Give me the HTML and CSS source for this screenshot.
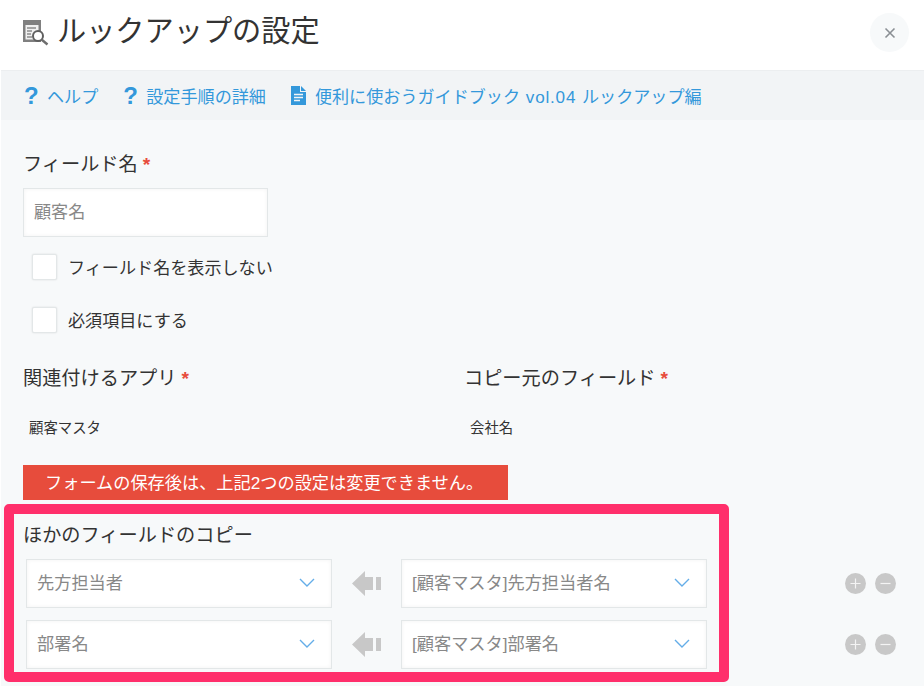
FILE: index.html
```html
<!DOCTYPE html>
<html lang="ja">
<head>
<meta charset="utf-8">
<title>ルックアップの設定</title>
<link rel="stylesheet" href="styles.css">
</head>
<body>
<div class="dialog">
  <header class="head">
    <svg class="head-icon" width="26" height="26" viewBox="0 0 26 26">
      <path d="M0 0h18v22H0z" fill="#808080"/>
      <rect x="2.500" y="5" width="13" height="14.500" fill="#f1f1f1"/>
      <path d="M4 8h9M4 11h5M4 14h4M4 17h5" stroke="#8c8c8c" stroke-width="1.300"/>
      <circle cx="15" cy="16" r="5" fill="#fff" stroke="#5f5f5f" stroke-width="2"/>
      <path d="M18.500 19.500l6 5" stroke="#6e6e6e" stroke-width="2.400"/>
    </svg>
    <h1 class="title">ルックアップの設定</h1>
    <button class="close" type="button"><svg width="12" height="12" viewBox="0 0 12 12"><path d="M1.500 1.500l9 9M10.500 1.500l-9 9" stroke="#8a8f94" stroke-width="1.600"/></svg></button>
  </header>
  <nav class="links">
    <a class="link"><span class="q">?</span><span class="link-text">ヘルプ</span></a>
    <a class="link"><span class="q">?</span><span class="link-text">設定手順の詳細</span></a>
    <a class="link link-doc"><svg class="doc" width="15" height="19" viewBox="0 0 15 19"><path d="M0 0h9v6h6v13H0z" fill="#3498db"/><path d="M10 0l5 5h-5z" fill="#3498db"/><path d="M3 8.500h9M3 11.500h9M3 14.500h6" stroke="#f2f4f6" stroke-width="1.300"/></svg><span class="link-text">便利に使おうガイドブック <span class="ver">vol.04</span> ルックアップ編</span></a>
  </nav>
  <main class="form">
    <div class="label label-first">フィールド名<span class="req">*</span></div>
    <div class="input"><span class="ph">顧客名</span></div>
    <label class="check check-first"><span class="box"></span><span class="check-text">フィールド名を表示しない</span></label>
    <label class="check"><span class="box"></span><span class="check-text">必須項目にする</span></label>
    <div class="pair">
      <div class="col">
        <div class="label">関連付けるアプリ<span class="req">*</span></div>
        <div class="value">顧客マスタ</div>
      </div>
      <div class="col">
        <div class="label">コピー元のフィールド<span class="req">*</span></div>
        <div class="value">会社名</div>
      </div>
    </div>
    <div class="alert">フォームの保存後は、上記2つの設定は変更できません。</div>
    <div class="label copy-label">ほかのフィールドのコピー</div>
    <div class="map">
      <div class="select"><span class="select-text">先方担当者</span><svg class="chev" width="16" height="9" viewBox="0 0 16 9"><path d="M1 1l7 7 7-7" fill="none" stroke="#64ade8" stroke-width="1.400"/></svg></div>
      <svg class="arrow" width="30" height="25" viewBox="0 0 30 25"><path d="M0 12.500L13 0v6h8v13h-8v6z" fill="#c8c8c8"/><rect x="24" y="6" width="5" height="13" fill="#c8c8c8"/></svg>
      <div class="select"><span class="select-text">[顧客マスタ]先方担当者名</span><svg class="chev" width="16" height="9" viewBox="0 0 16 9"><path d="M1 1l7 7 7-7" fill="none" stroke="#64ade8" stroke-width="1.400"/></svg></div>
      <div class="btns"><span class="round"><svg width="21" height="21" viewBox="0 0 21 21"><path d="M5.500 10.500h10M10.500 5.500v10" stroke="#f4f4f4" stroke-width="1.200"/></svg></span><span class="round"><svg width="21" height="21" viewBox="0 0 21 21"><path d="M5.500 10.500h10" stroke="#f4f4f4" stroke-width="1.200"/></svg></span></div>
      <div class="select"><span class="select-text">部署名</span><svg class="chev" width="16" height="9" viewBox="0 0 16 9"><path d="M1 1l7 7 7-7" fill="none" stroke="#64ade8" stroke-width="1.400"/></svg></div>
      <svg class="arrow" width="30" height="25" viewBox="0 0 30 25"><path d="M0 12.500L13 0v6h8v13h-8v6z" fill="#c8c8c8"/><rect x="24" y="6" width="5" height="13" fill="#c8c8c8"/></svg>
      <div class="select"><span class="select-text">[顧客マスタ]部署名</span><svg class="chev" width="16" height="9" viewBox="0 0 16 9"><path d="M1 1l7 7 7-7" fill="none" stroke="#64ade8" stroke-width="1.400"/></svg></div>
      <div class="btns"><span class="round"><svg width="21" height="21" viewBox="0 0 21 21"><path d="M5.500 10.500h10M10.500 5.500v10" stroke="#f4f4f4" stroke-width="1.200"/></svg></span><span class="round"><svg width="21" height="21" viewBox="0 0 21 21"><path d="M5.500 10.500h10" stroke="#f4f4f4" stroke-width="1.200"/></svg></span></div>
    </div>
  </main>
  <div class="highlight"></div>
</div>
</body>
</html>
```
FILE: styles.css
```css
* { box-sizing: border-box; }
html, body { margin: 0; padding: 0; }
body {
  width: 924px;
  height: 686px;
  overflow: hidden;
  background: #fff;
  font-family: "Liberation Sans", "Noto Sans CJK JP", sans-serif;
  color: #333;
}
.dialog { position: relative; width: 924px; height: 686px; display: flex; flex-direction: column; }
.head {
  height: 70px;
  flex: none;
  display: flex;
  align-items: center;
  padding: 0 15px 9px 23px;
  background: #fff;
}
.head-icon { flex: none; margin-right: 8px; margin-top: 5px; }
.title { margin: 0; flex: 1; font-size: 29.200px; font-weight: 400; line-height: 40px; color: #333; }
.close {
  width: 39px;
  height: 39px;
  margin-top: 4px;
  border: 0;
  padding: 0;
  border-radius: 50%;
  background: #f7f9fa;
  display: flex;
  align-items: center;
  justify-content: center;
}
.links {
  height: 50px;
  flex: none;
  margin-left: 1px;
  display: flex;
  align-items: center;
  gap: 24px;
  padding-left: 22px;
  background: #f2f4f6;
  border-top: 1px solid #eceef0;
}
.link { display: flex; align-items: center; font-size: 17.100px; color: #3498db; white-space: nowrap; line-height: 24px; }
.link-text { margin-top: 4px; word-spacing: 1px; }
.ver { letter-spacing: .8px; }
.link-doc { margin-left: 1px; }
.q { width: 24px; font-weight: 700; font-size: 24px; padding-left: 1px; }
.doc { margin-right: 9px; }
.form { flex: 1; margin-left: 1px; background: #f7f9fa; padding: 0 0 0 22px; }
.label { font-size: 19.200px; line-height: 28px; color: #333; white-space: nowrap; }
.label-first { margin-top: 31px; }
.req { color: #e74c3c; margin-left: 5px; font-weight: 700; }
.input {
  width: 245px;
  height: 49px;
  margin-top: 9px;
  border: 1px solid #e3e7e8;
  background: #fff;
  box-shadow: inset 0 0 4px rgba(0, 0, 0, .05);
  padding: 0 0 5px 10px;
  display: flex;
  align-items: center;
}
.ph { font-size: 17.100px; color: #888; }
.check { display: flex; align-items: center; font-size: 17.100px; height: 26px; margin: 27px 0 0 9px; color: #333; }
.check-first { margin-top: 17px; }
.check-text { margin-bottom: 2px; }
.box {
  width: 25px;
  height: 26px;
  margin-right: 11px;
  border: 1px solid #e3e7e8;
  border-radius: 2px;
  background: #fff;
  box-shadow: 0 0 2px rgba(0, 0, 0, .12);
}
.pair { display: flex; margin-top: 32px; }
.col { width: 441px; }
.value { font-size: 14.400px; line-height: 20px; color: #333; margin: 25px 0 0 6px; }
.alert {
  width: 485px;
  height: 35px;
  margin-top: 27px;
  background: #e74c3c;
  color: #fff;
  font-size: 17.200px;
  line-height: 37px;
  padding-left: 22px;
  white-space: nowrap;
}
.copy-label { margin: 22px 0 0; }
.map {
  margin: 9px 0 0 3px;
  display: grid;
  grid-template-columns: 306px 69px 306px auto;
  grid-auto-rows: 49px;
  row-gap: 12px;
  align-items: center;
}
.select {
  height: 49px;
  border: 1px solid #e3e7e8;
  background: #fff;
  box-shadow: inset 0 0 4px rgba(0, 0, 0, .05);
  display: flex;
  align-items: center;
  justify-content: space-between;
  padding: 0 16px 0 10px;
  font-size: 17.200px;
  color: #888;
  white-space: nowrap;
}
.select-text { margin-bottom: 4px; }
.chev { margin-bottom: 3px; }
.arrow { margin-left: 20px; }
.btns { display: flex; gap: 9px; margin-left: 138px; }
.round { width: 21px; height: 21px; border-radius: 50%; background: #c8c8c8; display: block; }
.round svg { display: block; }
.highlight {
  position: absolute;
  left: 4px;
  top: 504px;
  width: 725px;
  height: 178px;
  border: 10.500px solid #ff2f6b;
  border-radius: 5px;
  pointer-events: none;
}
```
